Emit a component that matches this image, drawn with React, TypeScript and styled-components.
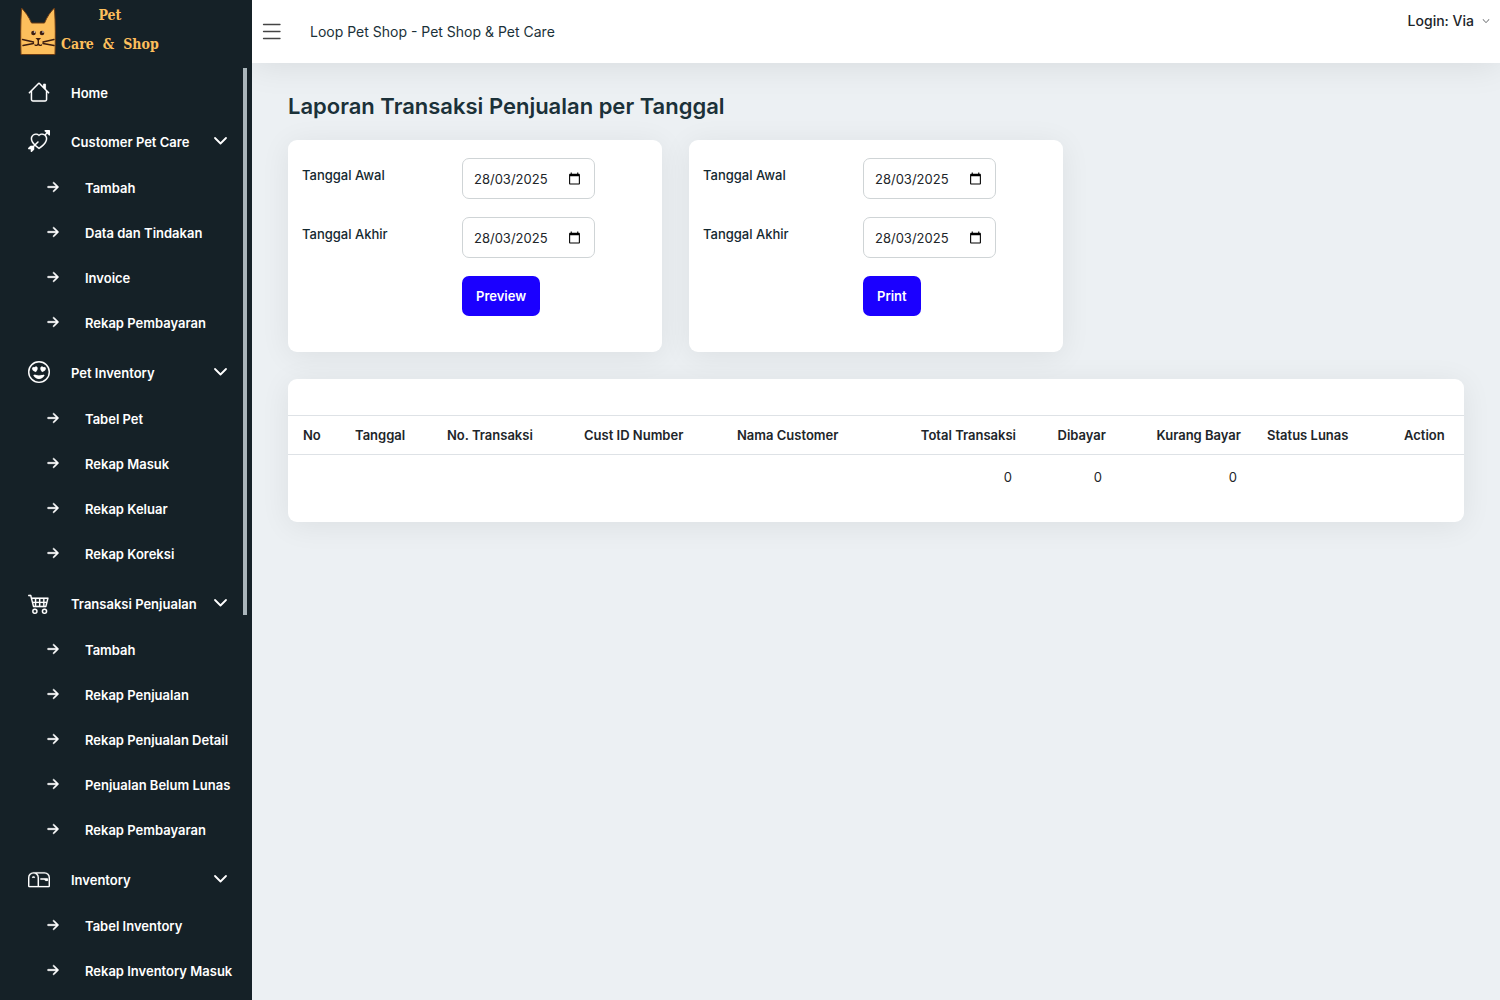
import React, { useState } from "react";
import styled, { createGlobalStyle } from "styled-components";
import {
  BsArrowRightShort,
  BsArrowThroughHeart,
  BsCart4,
  BsChevronDown,
  BsEmojiHeartEyes,
  BsHouse,
  BsMailbox,
} from "react-icons/bs";

const GlobalStyle = createGlobalStyle`
  *, *::before, *::after { box-sizing: border-box; }
  body {
    margin: 0;
    background: #ecf0f3;
    color: #1b3139;
    font-family: Inter, "Liberation Sans", sans-serif;
    font-size: 13px;
    line-height: 20px;
  }
  button, input { font: inherit; color: inherit; }
`;

const Shell = styled.div`
  display: grid;
  grid-template-columns: 252px minmax(0, 1fr);
  height: 100vh;
`;

const Sidebar = styled.aside`
  position: relative;
  display: flex;
  flex-direction: column;
  min-height: 0;
  background: #152127;
  color: #fff;
`;

const Brand = styled.a`
  display: flex;
  flex: none;
  gap: 4px;
  height: 68px;
  padding: 4px 0 0 19px;
  color: #fdbf5c;
  text-decoration: none;
`;

const BrandText = styled.span`
  display: flex;
  flex-direction: column;
  align-items: center;
  font-family: "DejaVu Serif Condensed", "DejaVu Serif", serif;
  font-weight: 700;
  font-size: 14px;
  line-height: 29px;
  margin-top: -3px;
`;

const BrandLine = styled.span`
  display: flex;
  gap: 9px;
`;

const Menu = styled.nav`
  flex: 1;
  min-height: 0;
  overflow: hidden;
`;

const List = styled.ul`
  list-style: none;
  margin: 0;
  padding: 0;
`;

const Group = styled.li`
  padding-bottom: 3px;
`;

const rowText = `
  display: flex;
  align-items: center;
  width: 100%;
  border: 0;
  background: none;
  color: #fff;
  font-weight: 600;
  font-size: 13px;
  line-height: 20px;
  text-align: left;
  text-decoration: none;
  white-space: nowrap;
  cursor: pointer;
`;

const HomeLink = styled.a`
  ${rowText}
  height: 46px;
  padding: 2px 24px 0 28px;
`;

const GroupButton = styled.button`
  ${rowText}
  height: 48px;
  padding: 0 24px 1px 28px;
`;

const RowIcon = styled.span<{ $bold?: boolean }>`
  display: flex;
  width: 43px;
  font-size: 22px;
  path {
    stroke: currentColor;
    stroke-width: ${(p) => (p.$bold ? "0.4px" : "0.1px")};
  }
`;

const RowLabel = styled.span`
  flex: 1;
  padding-top: 2px;
`;

const SubLink = styled.a`
  ${rowText}
  height: 45px;
  padding: 0 0 2px 42px;
`;

const ScrollThumb = styled.div`
  position: absolute;
  top: 68px;
  right: 5px;
  width: 4px;
  height: 547px;
  background: #a9b5ba;
`;

const Main = styled.div`
  display: flex;
  flex-direction: column;
  min-width: 0;
`;

const Header = styled.header`
  display: flex;
  align-items: center;
  flex: none;
  height: 63px;
  padding: 0 10px;
  background: #fff;
  box-shadow: 0 0 36px rgba(0, 0, 0, 0.1);
`;

const MenuToggle = styled.button`
  display: flex;
  padding: 0;
  border: 0;
  background: none;
  cursor: pointer;
`;

const SiteName = styled.span`
  flex: 1;
  padding-left: 28px;
  font-size: 14px;
`;

const UserButton = styled.button`
  display: flex;
  align-items: center;
  align-self: flex-start;
  gap: 8px;
  padding: 0;
  margin-top: 11px;
  border: 0;
  background: none;
  color: #212529;
  font-weight: 500;
  font-size: 14px;
  cursor: pointer;
  svg { font-size: 8px; }
`;

const Content = styled.main`
  padding: 28px 36px;
`;

const Title = styled.h1`
  margin: 0 0 18px;
  font-weight: 600;
  font-size: 22px;
  line-height: 31px;
`;

const Card = styled.section`
  border-radius: 9px;
  background: #fff;
  box-shadow: 0 4px 30px rgba(0, 0, 0, 0.07);
`;

const Filters = styled.div`
  display: grid;
  grid-template-columns: repeat(auto-fit, 374px);
  gap: 27px;
  margin-bottom: 27px;
`;

const FilterForm = styled(Card).attrs({ as: "form" })`
  display: flex;
  flex-direction: column;
  gap: 18px;
  padding: 18px 14px 36px;
`;

const Field = styled.div`
  display: grid;
  grid-template-columns: 160px 133px;
`;

const FieldLabel = styled.label`
  padding-top: 7px;
  color: #14282f;
  font-weight: 500;
`;

const DateBox = styled.div`
  display: flex;
  align-items: center;
  height: 41px;
  padding: 0 13px 0 11px;
  border: 1px solid #cfd4d6;
  border-radius: 7px;
`;

const DateInput = styled.input`
  flex: 1;
  min-width: 0;
  padding: 0;
  border: 0;
  outline: 0;
  background: none;
  color: #212529;
`;

const PickerButton = styled.button`
  display: flex;
  padding: 0;
  border: 0;
  background: none;
  color: #000;
`;

const Submit = styled.button`
  grid-column: 2;
  justify-self: start;
  height: 40px;
  padding: 0 14px;
  border: 0;
  border-radius: 7px;
  background: #1b00ff;
  color: #fff;
  font-weight: 600;
  cursor: pointer;
`;

const TableCard = styled(Card)`
  padding: 36px 0 22px;
`;

const Table = styled.table`
  width: 100%;
  table-layout: fixed;
  border-collapse: collapse;
  color: #212529;
`;

const Th = styled.th<{ $right?: boolean }>`
  height: 39px;
  padding: 0 11px 0 15px;
  border-top: 1px solid #dee2e6;
  border-bottom: 1px solid #dee2e6;
  font-weight: 600;
  text-align: ${(p) => (p.$right ? "right" : "left")};
  white-space: nowrap;
`;

const Td = styled.td`
  height: 45px;
  padding: 0 15px;
  text-align: right;
`;

const CatLogo = () => (
  <svg width="38" height="52" viewBox="0 0 38 52" aria-hidden="true">
    <path d="M2.500 4C6 7.500 10 13 12.500 19H25.500C28 13 31.500 7.500 35.500 4C36.500 20 36.500 35 36 50.500H2C1.500 35 1.500 20 2.500 4Z" fill="#fdbf5c" stroke="#6b3a12" strokeWidth="1" />
    <g fill="#3d1d10">
      <circle cx="14.500" cy="29" r="2.300" />
      <circle cx="23" cy="29" r="2.300" />
      <path d="M16.500 34H22L19.300 37Z" />
    </g>
    <circle cx="15.500" cy="28" r="0.800" fill="#fff" />
    <circle cx="24" cy="28" r="0.800" fill="#fff" />
    <g fill="none" stroke="#3d1d10" strokeWidth="1.400" strokeLinecap="round">
      <path d="M19.300 36V40M16 41C17.500 42 19 41 19.300 39.500C19.600 41 21 42 22.500 41M3.500 35.500L14.500 38M4 41.500L14.500 39.500M35 35.500L24 38M35 41.500L24 39.500" />
    </g>
  </svg>
);

const CalendarIcon = () => (
  <svg width="13" height="13" viewBox="0 0 24 24" aria-hidden="true">
    <path fill="currentColor" d="M20 3h-1V1h-2v2H7V1H5v2H4c-1.100 0-2 .9-2 2v16c0 1.100.9 2 2 2h16c1.100 0 2-.9 2-2V5c0-1.100-.9-2-2-2zm0 18H4V8h16v13z" />
  </svg>
);

const Bars = () => (
  <svg width="20" height="18" viewBox="0 0 20 18" aria-hidden="true">
    <path d="M1.500 1.500H18M1.500 8.500H18M1.500 15.500H18" fill="none" stroke="#444" strokeWidth="1.300" strokeLinecap="round" />
  </svg>
);

const Chevron = () => (
  <svg width="15" height="10" viewBox="0 0 15 10" aria-hidden="true">
    <path d="M2 2L7.500 7.500L13 2" fill="none" stroke="#fff" strokeWidth="1.800" strokeLinecap="round" strokeLinejoin="round" />
  </svg>
);

const groups = [
  {
    label: "Customer Pet Care",
    Icon: BsArrowThroughHeart,
    items: ["Tambah", "Data dan Tindakan", "Invoice", "Rekap Pembayaran"],
  },
  {
    label: "Pet Inventory",
    Icon: BsEmojiHeartEyes,
    items: ["Tabel Pet", "Rekap Masuk", "Rekap Keluar", "Rekap Koreksi"],
  },
  {
    label: "Transaksi Penjualan",
    Icon: BsCart4,
    items: ["Tambah", "Rekap Penjualan", "Rekap Penjualan Detail", "Penjualan Belum Lunas", "Rekap Pembayaran"],
  },
  {
    label: "Inventory",
    Icon: BsMailbox,
    items: ["Tabel Inventory", "Rekap Inventory Masuk"],
  },
];

const columns = [
  { label: "No", width: 52 },
  { label: "Tanggal", width: 92 },
  { label: "No. Transaksi", width: 137 },
  { label: "Cust ID Number", width: 153 },
  { label: "Nama Customer", width: 178 },
  { label: "Total Transaksi", width: 127, total: "0" },
  { label: "Dibayar", width: 90, total: "0" },
  { label: "Kurang Bayar", width: 135, total: "0" },
  { label: "Status Lunas", width: 137 },
  { label: "Action", width: 75 },
];

function DateField({ id, label }: { id: string; label: string }) {
  const [value, setValue] = useState("28/03/2025");
  return (
    <Field>
      <FieldLabel htmlFor={id}>{label}</FieldLabel>
      <DateBox>
        <DateInput id={id} inputMode="numeric" value={value} onChange={(e) => setValue(e.target.value)} />
        <PickerButton type="button" aria-label={`Pilih ${label}`}>
          <CalendarIcon />
        </PickerButton>
      </DateBox>
    </Field>
  );
}

function Filter({ name, action }: { name: string; action: string }) {
  return (
    <FilterForm onSubmit={(e: React.FormEvent) => e.preventDefault()}>
      <DateField id={`${name}-awal`} label="Tanggal Awal" />
      <DateField id={`${name}-akhir`} label="Tanggal Akhir" />
      <Field>
        <Submit type="submit">{action}</Submit>
      </Field>
    </FilterForm>
  );
}

export default function App() {
  return (
    <Shell>
      <GlobalStyle />
      <Sidebar>
        <Brand href="#">
          <CatLogo />
          <BrandText>
            <span>Pet</span>
            <BrandLine>
              <span>Care</span>
              <span>&amp;</span>
              <span>Shop</span>
            </BrandLine>
          </BrandText>
        </Brand>
        <Menu>
          <List>
            <Group>
              <HomeLink href="#">
                <RowIcon><BsHouse /></RowIcon>
                <RowLabel>Home</RowLabel>
              </HomeLink>
            </Group>
            {groups.map(({ label, Icon, items }) => (
              <Group key={label}>
                <GroupButton type="button" aria-expanded="true">
                  <RowIcon><Icon /></RowIcon>
                  <RowLabel>{label}</RowLabel>
                  <Chevron />
                </GroupButton>
                <List>
                  {items.map((item) => (
                    <li key={item}>
                      <SubLink href="#">
                        <RowIcon $bold><BsArrowRightShort /></RowIcon>
                        <RowLabel>{item}</RowLabel>
                      </SubLink>
                    </li>
                  ))}
                </List>
              </Group>
            ))}
          </List>
        </Menu>
        <ScrollThumb />
      </Sidebar>
      <Main>
        <Header>
          <MenuToggle type="button" aria-label="Menu"><Bars /></MenuToggle>
          <SiteName>Loop Pet Shop - Pet Shop &amp; Pet Care</SiteName>
          <UserButton type="button">Login: Via <BsChevronDown /></UserButton>
        </Header>
        <Content>
          <Title>Laporan Transaksi Penjualan per Tanggal</Title>
          <Filters>
            <Filter name="preview" action="Preview" />
            <Filter name="print" action="Print" />
          </Filters>
          <TableCard>
            <Table>
              <colgroup>
                {columns.map((c) => <col key={c.label} width={c.width} />)}
              </colgroup>
              <thead>
                <tr>
                  {columns.map((c) => <Th key={c.label} scope="col" $right={!!c.total}>{c.label}</Th>)}
                </tr>
              </thead>
              <tbody>
                <tr>
                  {columns.map((c) => <Td key={c.label}>{c.total}</Td>)}
                </tr>
              </tbody>
            </Table>
          </TableCard>
        </Content>
      </Main>
    </Shell>
  );
}
